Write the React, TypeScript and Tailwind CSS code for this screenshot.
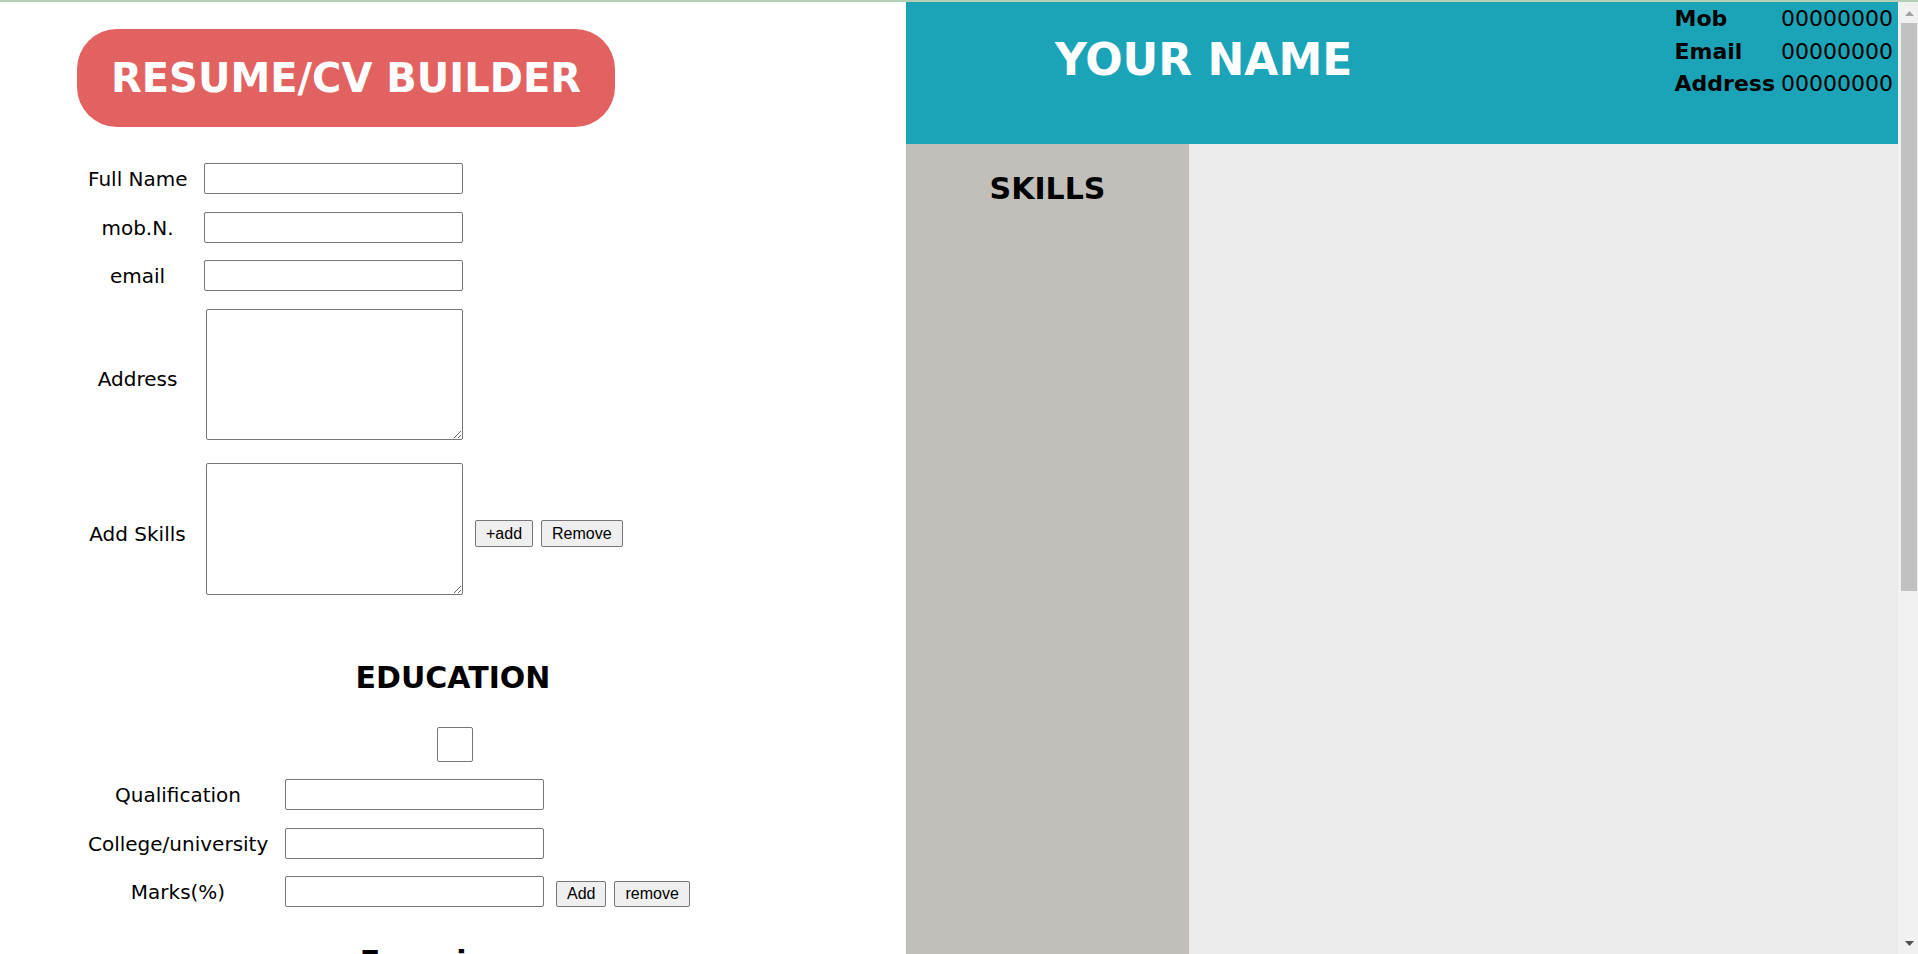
import React from 'react'

const inputCls = 'block h-[31px] w-[259px] rounded-[2px] border border-[#767676] bg-white'
const btnCls =
  "rounded-[2px] border border-[#767676] bg-[#efefef] px-[10px] font-['Liberation_Sans',Arial,sans-serif] text-[16px] leading-none text-black"

function Row({ label, labelW, gap, children, className = '' }: { label: string; labelW: string; gap: string; children: React.ReactNode; className?: string }) {
  return (
    <div className={`flex items-center ${className}`}>
      <div className={`${labelW} ${gap} shrink-0 whitespace-nowrap text-center text-[20px]`}>{label}</div>
      {children}
    </div>
  )
}

function BuilderForm() {
  return (
    <div className="h-full w-[906px] shrink-0 overflow-hidden bg-white">
      {/* Title */}
      <div className="ml-[77px] mt-[27px] flex h-[98px] w-[538px] items-center justify-center rounded-[40px] bg-[#e26262] text-[40px] font-bold text-white">
        RESUME/CV BUILDER
      </div>

      {/* Personal details */}
      <div className="ml-[88px] mt-[36px]">
        <Row label="Full Name" labelW="w-[99px]" gap="mr-[17px]">
          <input className={inputCls} />
        </Row>
        <Row label="mob.N." labelW="w-[99px]" gap="mr-[17px]" className="mt-[18px]">
          <input className={inputCls} />
        </Row>
        <Row label="email" labelW="w-[99px]" gap="mr-[17px]" className="mt-[17px]">
          <input className={inputCls} />
        </Row>
        <Row label="Address" labelW="w-[99px] pt-[8px]" gap="mr-[19px]" className="mt-[18px]">
          <textarea className="block h-[131px] w-[257px] rounded-[2px] border border-[#767676] bg-white" />
        </Row>
        <Row label="Add Skills" labelW="w-[99px] pt-[9px]" gap="mr-[19px]" className="mt-[23px]">
          <textarea className="block h-[132px] w-[257px] rounded-[2px] border border-[#767676] bg-white" />
          <div className="ml-[12px] mt-[9px] flex gap-[8px]">
            <button className={`${btnCls} h-[27px]`}>+add</button>
            <button className={`${btnCls} h-[27px]`}>Remove</button>
          </div>
        </Row>
      </div>

      {/* Education */}
      <h2 className="mt-[68px] text-center text-[30px] font-bold leading-none">EDUCATION</h2>
      <input className="ml-[437px] mt-[34px] block h-[35px] w-[36px] rounded-[2px] border border-[#767676] bg-white" />
      <div className="ml-[88px] mt-[17px]">
        <Row label="Qualification" labelW="w-[180px]" gap="mr-[17px]">
          <input className={inputCls} />
        </Row>
        <Row label="College/university" labelW="w-[180px]" gap="mr-[17px]" className="mt-[18px]">
          <input className={inputCls} />
        </Row>
        <Row label="Marks(%)" labelW="w-[180px]" gap="mr-[17px]" className="mt-[17px]">
          <input className={inputCls} />
          <div className="ml-[12px] flex gap-[8px] self-end">
            <button className={`${btnCls} h-[26px]`}>Add</button>
            <button className={`${btnCls} h-[26px]`}>remove</button>
          </div>
        </Row>
      </div>

      <h2 className="mt-[40px] text-center text-[30px] font-bold leading-none">Experience</h2>
    </div>
  )
}

function ResumePreview() {
  const contacts = [
    ['Mob', '00000000'],
    ['Email', '00000000'],
    ['Address', '00000000'],
  ]
  return (
    <div className="flex min-w-0 flex-1 flex-col">
      <div className="flex h-[142px] shrink-0 bg-[#1ba4b8]">
        <div className="w-[60%] pt-[36px] text-center text-[44px] font-bold leading-none text-white">YOUR NAME</div>
        <div className="ml-auto grid grid-cols-[auto_auto] content-start gap-x-[6px] pr-[5px] pt-[1px] text-[22px] leading-[32.5px]">
          {contacts.map(([k, v]) => (
            <React.Fragment key={k}>
              <div className="font-bold">{k}</div>
              <div>{v}</div>
            </React.Fragment>
          ))}
        </div>
      </div>
      <div className="flex flex-1">
        <div className="w-[283px] shrink-0 bg-[#c2bfbb] pt-[30px] text-center">
          <h2 className="text-[30px] font-bold leading-none">SKILLS</h2>
        </div>
        <div className="flex-1 bg-[#ebebeb]" />
      </div>
    </div>
  )
}

function Scrollbar() {
  return (
    <div className="flex w-[20px] shrink-0 flex-col bg-[#f1f1f1]">
      <div className="flex h-[21px] shrink-0 justify-center pl-[2px] pt-[9px]">
        <svg width="9" height="5" viewBox="0 0 9 5">
          <path d="M0 5 L4.5 0 L9 5 Z" fill="#a3a3a3" />
        </svg>
      </div>
      <div className="ml-[3px] h-[568px] w-[16px] shrink-0 bg-[#c1c1c1]" />
      <div className="flex-1" />
      <div className="flex h-[17px] shrink-0 justify-center pl-[2px] pt-[4px]">
        <svg width="9" height="5" viewBox="0 0 9 5">
          <path d="M0 0 L9 0 L4.5 5 Z" fill="#505050" />
        </svg>
      </div>
    </div>
  )
}

export default function App() {
  return (
    <div className="flex h-[954px] w-[1918px] flex-col overflow-hidden border-t-2 border-[#b5cfb5] bg-white font-['DejaVu_Sans',Verdana,sans-serif] text-black">
      <div className="flex min-h-0 flex-1">
        <BuilderForm />
        <ResumePreview />
        <Scrollbar />
      </div>
    </div>
  )
}
